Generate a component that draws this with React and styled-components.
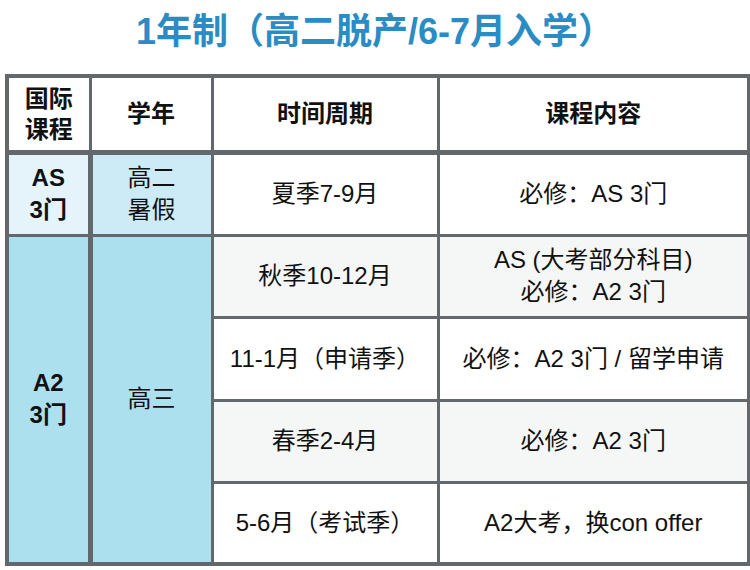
import React from "react";
import styled, { createGlobalStyle } from "styled-components";

const GlobalStyle = createGlobalStyle`
  html, body {
    margin: 0;
    padding: 0;
    background: #fff;
  }
  body {
    font-family: "Liberation Sans", "Noto Sans CJK SC", sans-serif;
    color: #111;
  }
`;

const LINE = "#62686c";

const Page = styled.div`
  width: 750px;
  height: 570px;
  overflow: hidden;
`;

const Title = styled.h1`
  margin: 12px 0 22px;
  height: 40px;
  line-height: 40px;
  text-align: center;
  font-size: 36px;
  font-weight: 700;
  color: #2b8cc4;
`;

const Table = styled.table`
  margin-left: 5px;
  width: 742px;
  border-collapse: collapse;
  table-layout: fixed;
  border: 4px solid ${LINE};
`;

const Row = styled.tr`
  height: ${(p) => p.$h}px;
`;

const HeadCell = styled.th`
  border: 3px solid ${LINE};
  border-bottom-width: 5px;
  background: #fff;
  font-size: 24px;
  font-weight: 700;
  line-height: 31px;
  text-align: center;
  vertical-align: middle;
  padding: 0;
`;

const Cell = styled.td`
  border: 3px solid ${LINE};
  border-right-width: ${(p) => (p.$thick ? 5 : 3)}px;
  background: ${(p) => p.$bg || "#fff"};
  font-size: 24px;
  font-weight: ${(p) => (p.$bold ? 700 : 400)};
  line-height: 32px;
  text-align: center;
  vertical-align: middle;
  padding: 0;
  white-space: nowrap;
`;

const rows = [
  { time: "秋季10-12月", content: ["AS (大考部分科目)", "必修：A2 3门"], bg: "#f5f7f7" },
  { time: "11-1月（申请季）", content: ["必修：A2 3门 / 留学申请"] },
  { time: "春季2-4月", content: ["必修：A2 3门"], bg: "#f5f7f7" },
  { time: "5-6月（考试季）", content: ["A2大考，换con offer"] },
];

const heights = [82, 83, 82, 82];

const Lines = ({ items }) =>
  items.map((t, i) => (
    <React.Fragment key={i}>
      {i > 0 && <br />}
      {t}
    </React.Fragment>
  ));

export default function App() {
  return (
    <Page>
      <GlobalStyle />
      <Title>1年制（高二脱产/6-7月入学）</Title>
      <Table>
        <colgroup>
          <col style={{ width: 83 }} />
          <col style={{ width: 122 }} />
          <col style={{ width: 226 }} />
          <col style={{ width: 311 }} />
        </colgroup>
        <tbody>
          <Row $h={76}>
            <HeadCell>
              国际
              <br />
              课程
            </HeadCell>
            <HeadCell>学年</HeadCell>
            <HeadCell>时间周期</HeadCell>
            <HeadCell>课程内容</HeadCell>
          </Row>
          <Row $h={83}>
            <Cell $bg="#e5f4fb" $bold $thick>
              AS
              <br />
              3门
            </Cell>
            <Cell $bg="#cdebf7">
              高二
              <br />
              暑假
            </Cell>
            <Cell>夏季7-9月</Cell>
            <Cell>必修：AS 3门</Cell>
          </Row>
          {rows.map((r, i) => (
            <Row $h={heights[i]} key={r.time}>
              {i === 0 && (
                <>
                  <Cell rowSpan={4} $bg="#ade0ef" $bold $thick>
                    A2
                    <br />
                    3门
                  </Cell>
                  <Cell rowSpan={4} $bg="#ade0ef">
                    高三
                  </Cell>
                </>
              )}
              <Cell $bg={r.bg}>{r.time}</Cell>
              <Cell $bg={r.bg}>
                <Lines items={r.content} />
              </Cell>
            </Row>
          ))}
        </tbody>
      </Table>
    </Page>
  );
}
